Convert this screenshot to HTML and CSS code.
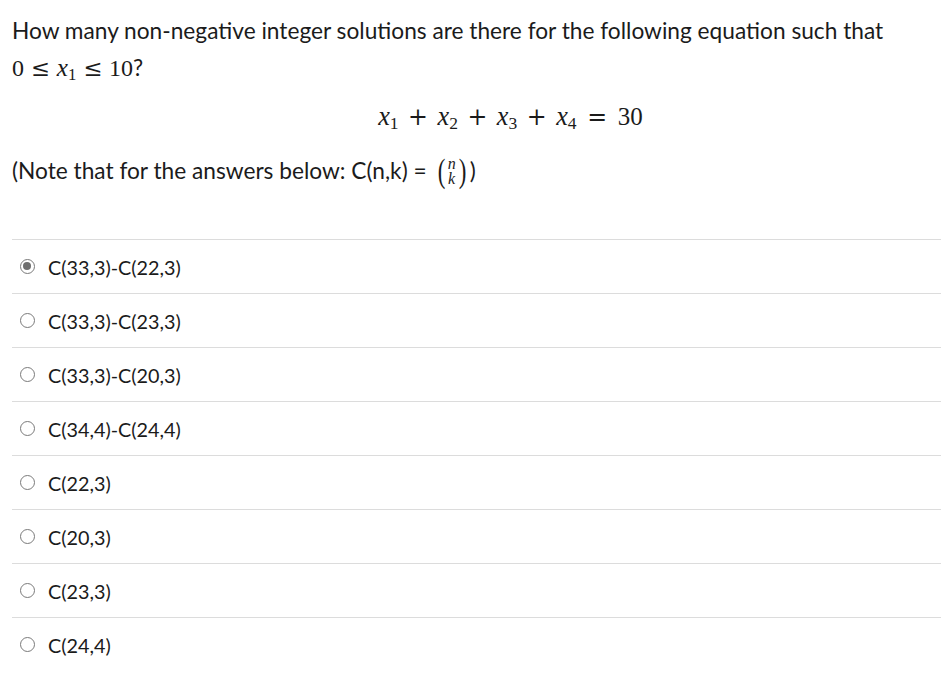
FILE: index.html
```html
<!DOCTYPE html>
<html>
<head>
<meta charset="utf-8">
<link rel="stylesheet" href="styles.css">
</head>
<body>
<div class="question">
  <p class="q-text">How many non-negative integer solutions are there for the following equation such that <span class="math inline">0<span class="op">≤</span><i>x</i><sub>1</sub><span class="op">≤</span>10</span>?</p>
  <div class="equation"><span class="math"><i>x</i><sub>1</sub><span class="op">+</span><i>x</i><sub>2</sub><span class="op">+</span><i>x</i><sub>3</sub><span class="op">+</span><i>x</i><sub>4</sub><span class="op rel">=</span>30</span></div>
  <p class="note">(Note that for the answers below: C(n,k) =<span class="binom math"><span class="paren">(</span><span class="stack"><i class="top">n</i><i class="bot">k</i></span><span class="paren">)</span></span>)</p>
</div>
<ul class="answers">
  <li class="answer"><span class="radio checked"></span><span class="label">C(33,3)-C(22,3)</span></li>
  <li class="answer"><span class="radio"></span><span class="label">C(33,3)-C(23,3)</span></li>
  <li class="answer"><span class="radio"></span><span class="label">C(33,3)-C(20,3)</span></li>
  <li class="answer"><span class="radio"></span><span class="label">C(34,4)-C(24,4)</span></li>
  <li class="answer"><span class="radio"></span><span class="label">C(22,3)</span></li>
  <li class="answer"><span class="radio"></span><span class="label">C(20,3)</span></li>
  <li class="answer"><span class="radio"></span><span class="label">C(23,3)</span></li>
  <li class="answer"><span class="radio"></span><span class="label">C(24,4)</span></li>
</ul>
</body>
</html>
```
FILE: styles.css
```css
html, body {
  margin: 0;
  padding: 0;
  background: #fff;
  overflow: hidden;
}
body {
  padding: 12px 0 0 12px;
  font-family: Lato, "Open Sans", sans-serif;
  color: #1b1b1b;
}
.question {
  padding-right: 12px;
}
.q-text {
  margin: 0;
  font-size: 22.7px;
  line-height: 37px;
}
.math {
  font-family: "Liberation Serif", "DejaVu Serif", serif;
  white-space: nowrap;
}
.math i {
  font-style: italic;
  font-size: 1.05em;
}
.math sub {
  font-size: 0.7em;
  vertical-align: -0.25em;
  line-height: 0;
}
.inline {
  font-size: 24px;
}
.op {
  font-family: "DejaVu Serif", serif;
  font-size: 0.95em;
  padding: 0 0.3em;
}
.equation {
  text-align: center;
  padding-left: 80px;
  font-size: 25px;
  line-height: 32px;
  margin-top: 12px;
}
.equation .op {
  padding: 0 0.4em;
}
.equation .op.rel {
  padding: 0 0.45em;
}
.note {
  margin: 22px 0 0 0;
  font-size: 22.7px;
  line-height: 32px;
  display: flex;
  align-items: center;
}
.binom {
  display: inline-flex;
  align-items: center;
  gap: 2px;
  margin: 0 3px 0 10px;
  height: 32px;
}
.paren {
  font-size: 27px;
  line-height: 30px;
  transform: scale(0.85, 1.25);
}
.stack {
  display: inline-flex;
  flex-direction: column;
  align-items: center;
}
.stack i {
  display: block;
  font-size: 16px;
  line-height: 15px;
  height: 15px;
}
.answers {
  list-style: none;
  margin: 52px 0 0 0;
  padding: 0;
}
.answer {
  display: flex;
  align-items: center;
  height: 53px;
  border-top: 1px solid #dcdcdc;
  font-size: 19.8px;
}
.radio {
  box-sizing: border-box;
  width: 15px;
  height: 15px;
  border-radius: 50%;
  border: 1.5px solid #7a7a7a;
  margin-left: 8px;
  margin-right: 13px;
  position: relative;
  flex: none;
}
.radio.checked::after {
  content: "";
  position: absolute;
  left: 2px;
  top: 2px;
  width: 8px;
  height: 8px;
  border-radius: 50%;
  background: #6e6e6e;
}
.label {
  color: #1b1b1b;
}
```
